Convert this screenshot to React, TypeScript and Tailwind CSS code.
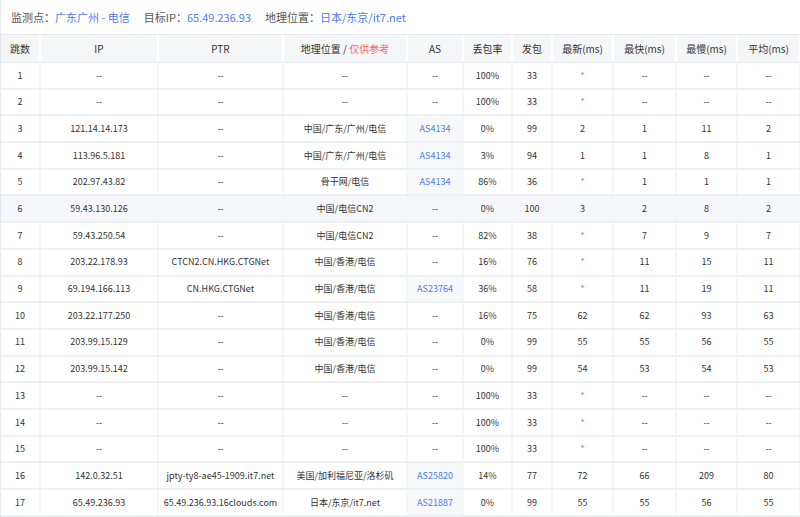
const rows: string[][] = [
["1","--","--","--","--","100%","33","*","--","--","--"],
["2","--","--","--","--","100%","33","*","--","--","--"],
["3","121.14.14.173","--","中国/广东/广州/电信","AS4134","0%","99","2","1","11","2"],
["4","113.96.5.181","--","中国/广东/广州/电信","AS4134","3%","94","1","1","8","1"],
["5","202.97.43.82","--","骨干网/电信","AS4134","86%","36","*","1","1","1"],
["6","59.43.130.126","--","中国/电信CN2","--","0%","100","3","2","8","2"],
["7","59.43.250.54","--","中国/电信CN2","--","82%","38","*","7","9","7"],
["8","203.22.178.93","CTCN2.CN.HKG.CTGNet","中国/香港/电信","--","16%","76","*","11","15","11"],
["9","69.194.166.113","CN.HKG.CTGNet","中国/香港/电信","AS23764","36%","58","*","11","19","11"],
["10","203.22.177.250","--","中国/香港/电信","--","16%","75","62","62","93","63"],
["11","203.99.15.129","--","中国/香港/电信","--","0%","99","55","55","56","55"],
["12","203.99.15.142","--","中国/香港/电信","--","0%","99","54","53","54","53"],
["13","--","--","--","--","100%","33","*","--","--","--"],
["14","--","--","--","--","100%","33","*","--","--","--"],
["15","--","--","--","--","100%","33","*","--","--","--"],
["16","142.0.32.51","jpty-ty8-ae45-1909.it7.net","美国/加利福尼亚/洛杉矶","AS25820","14%","77","72","66","209","80"],
["17","65.49.236.93","65.49.236.93.16clouds.com","日本/东京/it7.net","AS21887","0%","99","55","55","56","55"],
];
const widths = ["w-[40px]","w-[118px]","w-[125px]","w-[124px]","w-[56px]","w-[49px]","w-[40px]","w-[61px]","w-[63px]","w-[61px]","w-[63px]"];
const heads = ["跳数","IP","PTR","","AS","丢包率","发包","最新(ms)","最快(ms)","最慢(ms)","平均(ms)"];

export default function App() {
  return (
    <div className="w-[800px] h-[517px] overflow-hidden bg-white text-[#333] text-[9px] border-l border-[#e4e7ed]" style={{fontFamily:'"Noto Sans CJK SC","Noto Sans",sans-serif'}}>
      <div className="h-[34px] flex items-center pl-[10px] text-[11px] text-[#555]">
        <span>监测点：</span><span className="text-[#4d7cf0]">广东广州 - 电信</span>
        <span className="ml-[14px]">目标IP：</span><span className="text-[#4d7cf0]">65.49.236.93</span>
        <span className="ml-[14px]">地理位置：</span><span className="text-[#4d7cf0]">日本/东京/it7.net</span>
      </div>
      <div className="flex h-[29px] bg-[#f5f6f8] text-[10px] border-y border-[#e6e8ec]">
        {heads.map((h,i)=>(
          <div key={i} className={`${widths[i]} shrink-0 flex items-center justify-center border-r-2 border-white`}>
            {i===3 ? <span>地理位置 / <span className="text-[#f56c6c]">仅供参考</span></span> : h}
          </div>
        ))}
      </div>
      {rows.map((r,ri)=>(
        <div key={ri} className={`flex h-[26.7px] border-b-2 border-[#eef0f3] ${ri===5?"bg-[#f5f7fa]":""}`}>
          {r.map((c,ci)=>{
            const isAs = ci===4 && c!=="--";
            return (
              <div key={ci} className={`${widths[ci]} shrink-0 flex items-center justify-center border-r-2 border-[#f5f6f8] ${isAs?"bg-[#f7f8fa] text-[#4d7cf0]":""} ${ci===7&&c==="*"?"text-[#f56c6c]":""}`}>{c}</div>
            );
          })}
        </div>
      ))}
    </div>
  );
}
